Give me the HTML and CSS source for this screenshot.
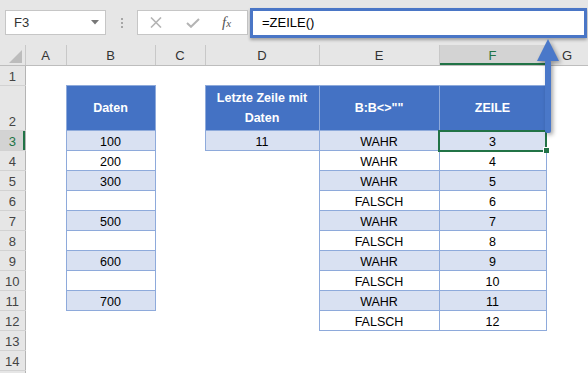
FILE: index.html
```html
<!DOCTYPE html>
<html lang="de">
<head>
  <meta charset="UTF-8">
  <link rel="stylesheet" href="styles.css">
</head>
<body>
  <div class="app">

    <div class="toolbar">
      <div class="name-box">
        <span>F3</span>
        <svg class="caret" viewBox="0 0 8 5"><polygon points="0,0 8,0 4,4.5" fill="#777"/></svg>
      </div>
      <div class="grip"><i></i><i></i><i></i></div>
      <div class="fn-box">
        <svg class="fn-icon" width="12" height="11" viewBox="0 0 12 11">
          <path d="M1 0.5 L11 10.5 M11 0.5 L1 10.5" stroke="#b4b4b4" stroke-width="1.6" fill="none"/>
        </svg>
        <svg class="fn-icon fn-check" width="14" height="10" viewBox="0 0 14 10">
          <path d="M1 5 L5 8.8 L13 1" stroke="#b4b4b4" stroke-width="2" fill="none"/>
        </svg>
        <span class="fx">f<small>x</small></span>
      </div>
      <div class="formula">=ZEILE()</div>
    </div>

    <table class="sheet">
      <colgroup>
        <col class="w-rh">
        <col class="w-a">
        <col class="w-b">
        <col class="w-c">
        <col class="w-d">
        <col class="w-e">
        <col class="w-f">
        <col class="w-g">
      </colgroup>
      <thead>
        <tr class="col-head">
          <th class="corner"><svg width="13" height="13" viewBox="0 0 13 13"><polygon points="13,0 13,13 0,13" fill="#bcbcbc"/></svg></th>
          <th>A</th><th>B</th><th>C</th><th>D</th><th>E</th><th class="active">F</th><th>G</th>
        </tr>
      </thead>
      <tbody>
        <tr>
          <th class="row-head">1</th><td></td><td></td><td></td><td></td><td></td><td></td><td></td>
        </tr>
        <tr class="tall">
          <th class="row-head">2</th><td></td>
          <td class="hd">Daten</td><td></td>
          <td class="hd">Letzte Zeile mit Daten</td>
          <td class="hd">B:B&lt;&gt;""</td>
          <td class="hd">ZEILE</td><td></td>
        </tr>
        <tr>
          <th class="row-head active">3</th><td></td>
          <td class="c band">100</td><td></td>
          <td class="c band">11</td>
          <td class="c band">WAHR</td>
          <td class="c band selected">3</td><td></td>
        </tr>
        <tr>
          <th class="row-head">4</th><td></td>
          <td class="c">200</td><td></td><td></td>
          <td class="c">WAHR</td>
          <td class="c">4</td><td></td>
        </tr>
        <tr>
          <th class="row-head">5</th><td></td>
          <td class="c band">300</td><td></td><td></td>
          <td class="c band">WAHR</td>
          <td class="c band">5</td><td></td>
        </tr>
        <tr>
          <th class="row-head">6</th><td></td>
          <td class="c"></td><td></td><td></td>
          <td class="c">FALSCH</td>
          <td class="c">6</td><td></td>
        </tr>
        <tr>
          <th class="row-head">7</th><td></td>
          <td class="c band">500</td><td></td><td></td>
          <td class="c band">WAHR</td>
          <td class="c band">7</td><td></td>
        </tr>
        <tr>
          <th class="row-head">8</th><td></td>
          <td class="c"></td><td></td><td></td>
          <td class="c">FALSCH</td>
          <td class="c">8</td><td></td>
        </tr>
        <tr>
          <th class="row-head">9</th><td></td>
          <td class="c band">600</td><td></td><td></td>
          <td class="c band">WAHR</td>
          <td class="c band">9</td><td></td>
        </tr>
        <tr>
          <th class="row-head">10</th><td></td>
          <td class="c"></td><td></td><td></td>
          <td class="c">FALSCH</td>
          <td class="c">10</td><td></td>
        </tr>
        <tr>
          <th class="row-head">11</th><td></td>
          <td class="c band">700</td><td></td><td></td>
          <td class="c band">WAHR</td>
          <td class="c band">11</td><td></td>
        </tr>
        <tr>
          <th class="row-head">12</th><td></td><td></td><td></td><td></td>
          <td class="c">FALSCH</td>
          <td class="c">12</td><td></td>
        </tr>
        <tr>
          <th class="row-head">13</th><td></td><td></td><td></td><td></td><td></td><td></td><td></td>
        </tr>
        <tr>
          <th class="row-head">14</th><td></td><td></td><td></td><td></td><td></td><td></td><td></td>
        </tr>
        <tr>
          <th class="row-head"></th><td></td><td></td><td></td><td></td><td></td><td></td><td></td>
        </tr>
      </tbody>
    </table>

    <!-- Pfeil vom Formelfeld zur Zelle F3 -->
    <svg class="arrow" width="40" height="110" viewBox="0 0 40 110">
      <polygon points="18,5 7,27 29,27" fill="#4a78c9"/>
      <rect x="15" y="26" width="6" height="73" rx="2" fill="#4a78c9"/>
    </svg>

  </div>
</body>
</html>
```

FILE: styles.css
```css
body {
  margin: 0;
  font-family: "Liberation Sans", Arial, sans-serif;
  background-color: #fff;
  color: #000;
}

.app {
  position: relative;
  width: 588px;
  height: 373px;
  overflow: hidden;
}


/* Formelleiste */
.toolbar {
  display: flex;
  align-items: center;
  height: 45px;
  padding-left: 5px;
  box-sizing: border-box;
  background-color: #e6e6e6;
}

.name-box {
  display: flex;
  align-items: center;
  justify-content: space-between;
  width: 101px;
  height: 25px;
  padding: 0 6px 0 8px;
  box-sizing: border-box;
  background-color: #fff;
  border: 1px solid #c6c6c6;
  font-size: 13px;
  color: #333;
}

.caret {
  width: 8px;
  height: 5px;
}

.grip {
  display: flex;
  flex-direction: column;
  align-items: center;
  gap: 2px;
  width: 31px;
}

.grip i {
  width: 2px;
  height: 2px;
  background-color: #a6a6a6;
}

.fn-box {
  display: flex;
  align-items: center;
  width: 111px;
  height: 25px;
  padding-left: 12px;
  box-sizing: border-box;
  background-color: #fff;
  border: 1px solid #c6c6c6;
}

.fn-check {
  margin-left: 24px;
}

.fx {
  margin-left: 22px;
  font-family: "Liberation Serif", serif;
  font-style: italic;
  font-size: 15px;
  color: #555;
}

.fx small {
  font-size: 11px;
}

.formula {
  display: flex;
  align-items: center;
  width: 337px;
  height: 30px;
  margin-left: 2px;
  padding-left: 9px;
  box-sizing: border-box;
  background-color: #fff;
  border: 3px solid #4a76c6;
  box-shadow: 0 2px 3px rgba(0, 0, 0, 0.3);
  font-size: 13px;
}


/* Tabellenblatt */
.sheet {
  width: 588px;
  border-collapse: collapse;
  table-layout: fixed;
  font-size: 12.5px;
}

.w-rh { width: 25px; }
.w-a { width: 41px; }
.w-b { width: 89px; }
.w-c { width: 50px; }
.w-d { width: 114px; }
.w-e { width: 120px; }
.w-f { width: 107px; }
.w-g { width: 42px; }

.sheet tr {
  height: 20px;
}

.sheet tr.tall {
  height: 45px;
}

.sheet th,
.sheet td {
  padding: 0;
}

.col-head th {
  height: 20px;
  background-color: #e6e6e6;
  border-right: 1px solid #c8c8c8;
  border-bottom: 1px solid #bdbdbd;
  font-weight: normal;
  font-size: 13px;
  color: #333;
}

.col-head th.active {
  background-color: #d3d3d3;
  color: #217346;
  box-shadow: inset 0 -2px 0 #217346;
}

.corner {
  vertical-align: bottom;
  text-align: right;
}

.corner svg {
  display: block;
  margin: 0 3px 2px auto;
}

.row-head {
  background-color: #e6e6e6;
  border-right: 1px solid #b4b4b4;
  border-bottom: 1px solid #d2d2d2;
  font-weight: normal;
  font-size: 13px;
  color: #444;
  vertical-align: bottom;
  padding-bottom: 1px !important;
}

.row-head.active {
  background-color: #d3d3d3;
  color: #217346;
  box-shadow: inset -2px 0 0 #217346;
}

.hd {
  background-color: #4472c4;
  border: 1px solid #8eaadb;
  color: #fff;
  font-weight: bold;
  font-size: 12.5px;
  line-height: 20px;
  text-align: center;
  padding: 0 1px !important;
}

.c {
  border: 1px solid #8eaadb;
  text-align: center;
  padding-top: 2px !important;
}

.band {
  background-color: #d9e1f2;
}

.selected {
  position: relative;
  outline: 2px solid #217346;
  outline-offset: -1px;
}

.selected::after {
  content: '';
  position: absolute;
  right: -3px;
  bottom: -3px;
  width: 5px;
  height: 5px;
  background-color: #217346;
  border-left: 1px solid #fff;
  border-top: 1px solid #fff;
}

.arrow {
  position: absolute;
  left: 530px;
  top: 34px;
  filter: drop-shadow(2px 2px 2px rgba(0, 0, 0, 0.35));
}
```
